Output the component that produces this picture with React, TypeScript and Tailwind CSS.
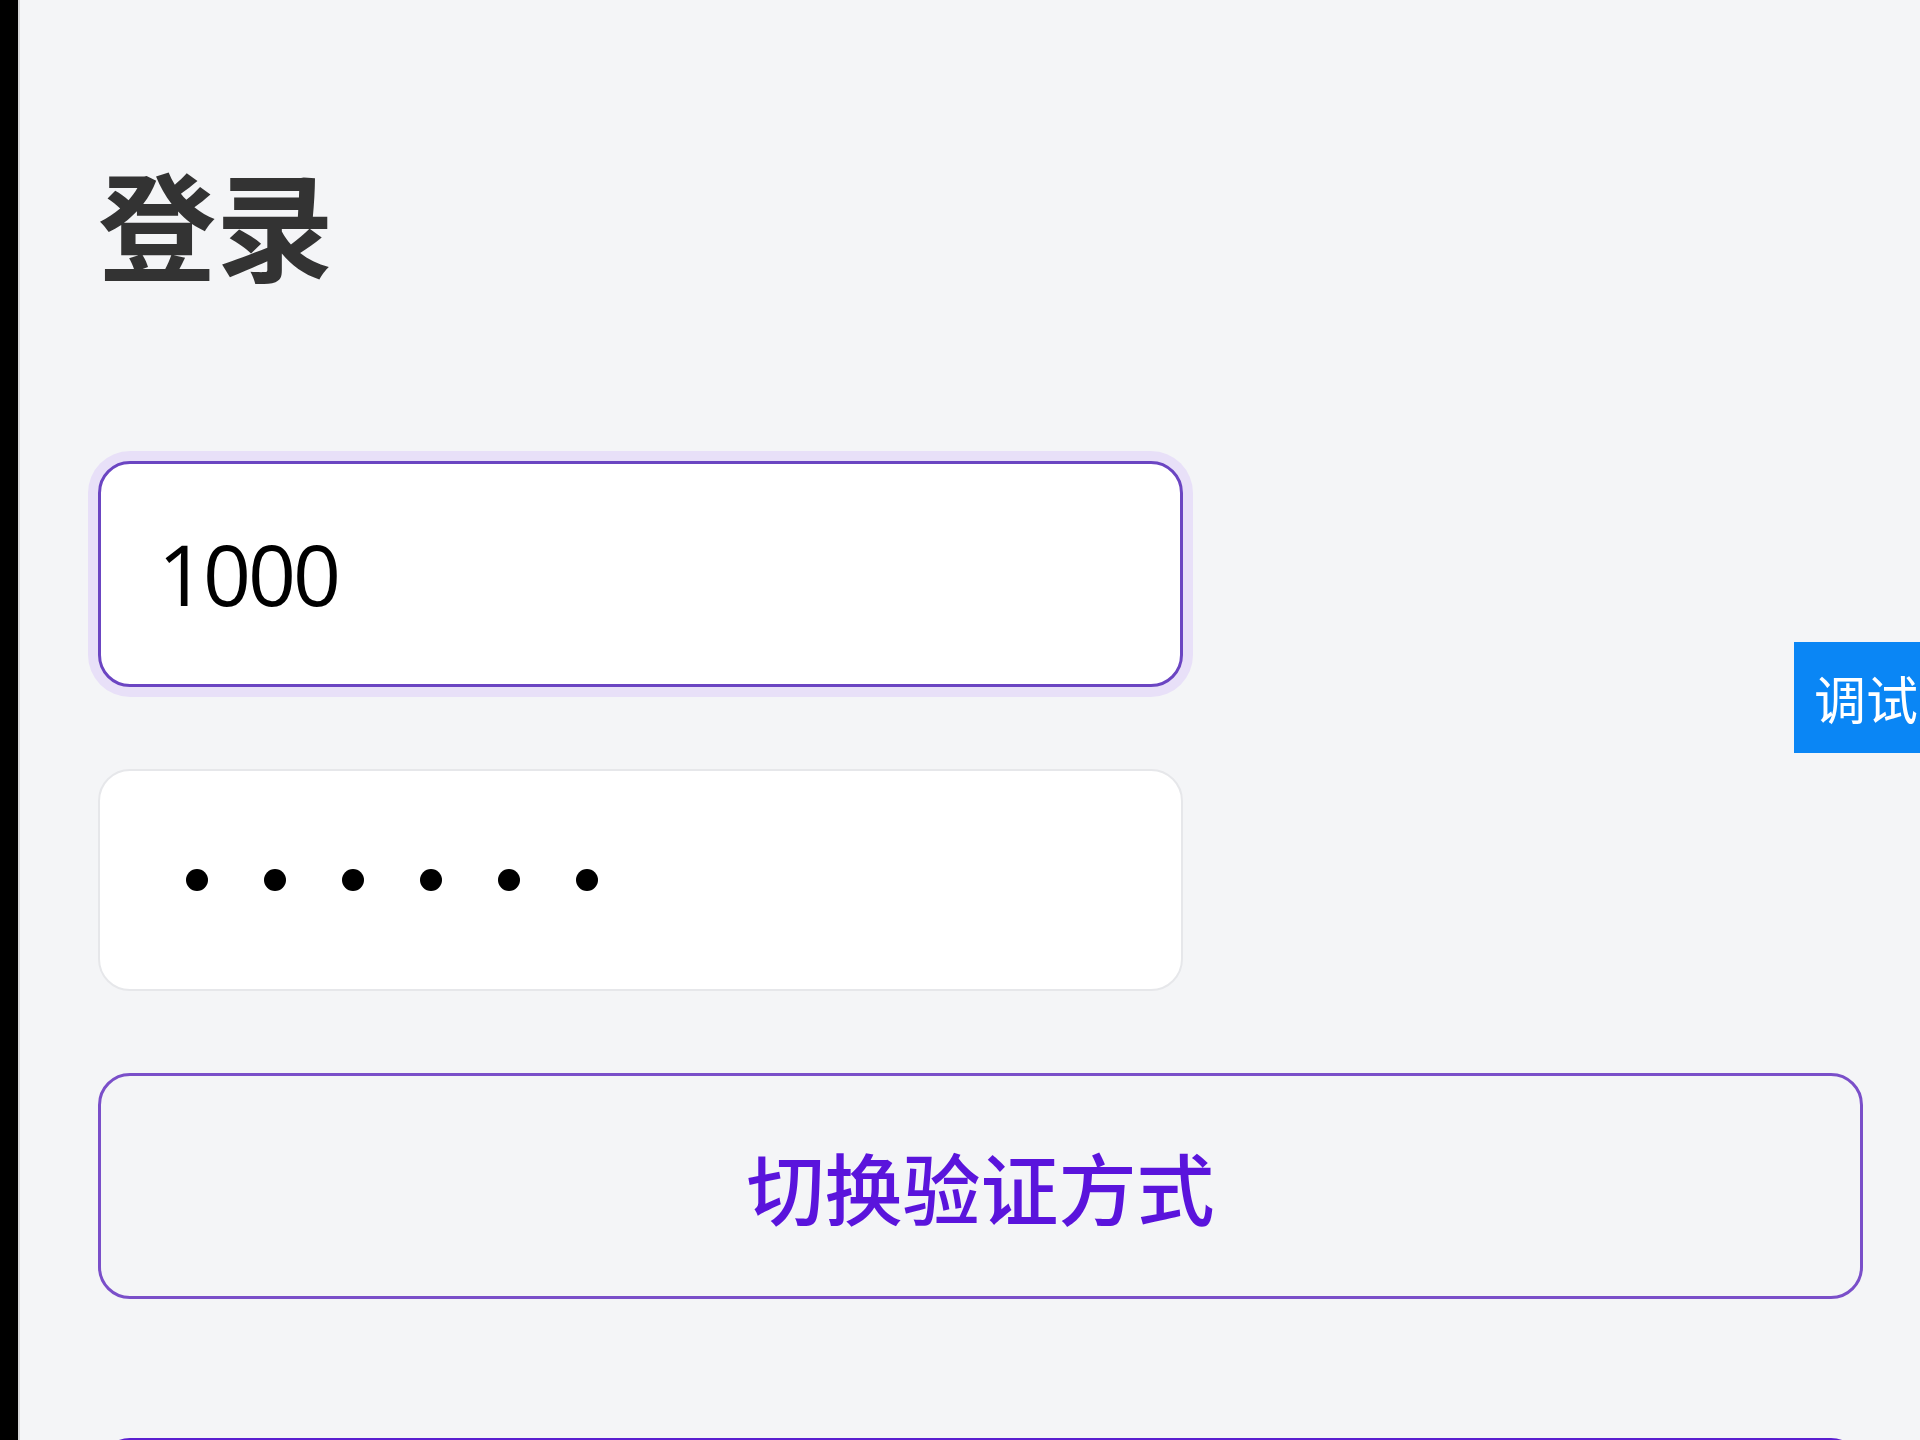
import React from 'react';

const LoginPage = () => {
  const dots = [0, 1, 2, 3, 4, 5];

  return (
    <div className="relative flex h-[1440px] w-full overflow-hidden bg-[#f4f5f7] font-['Noto_Sans_CJK_SC',sans-serif]">
      <div className="w-[18px] shrink-0 bg-black" />
      <div className="w-[2px] shrink-0 bg-[#d6d6d8]" />

      <main className="flex flex-1 flex-col pl-[78px] pt-[163px]">
        <h1 className="text-[118px] font-bold leading-none text-[#333333]">登录</h1>

        <div className="mt-[180px] flex flex-col gap-[82px]">
          <div className="flex h-[226px] w-[1085px] items-center rounded-[32px] border-[3px] border-[#6b45c2] bg-white pl-[57px] shadow-[0_0_0_10px_#e8e0f8]">
            <span className="font-['Open_Sans',sans-serif] text-[84px] tracking-[-3px] text-black">1000</span>
          </div>

          <div className="flex h-[222px] w-[1085px] items-center gap-[56px] rounded-[32px] border-2 border-[#e6e7ea] bg-white pl-[86px]">
            {dots.map((d) => (
              <span key={d} className="h-[22px] w-[22px] rounded-full bg-black" />
            ))}
          </div>

          <button className="flex h-[226px] w-[1765px] items-center justify-center rounded-[32px] border-[3px] border-[#7a4fc9] bg-transparent">
            <span className="text-[78px] font-medium text-[#5a14dc]">切换验证方式</span>
          </button>
        </div>

        <button className="mt-[139px] h-[226px] w-[1765px] shrink-0 rounded-[32px] bg-[#5b1fd0]" />
      </main>

      <div className="absolute left-[1794px] top-[642px] flex h-[111px] w-[200px] items-center bg-[#0a86f5] pl-[20px]">
        <span className="whitespace-nowrap text-[52px] leading-none text-white">调试</span>
      </div>
    </div>
  );
};

export default function App() {
  return <LoginPage />;
}
